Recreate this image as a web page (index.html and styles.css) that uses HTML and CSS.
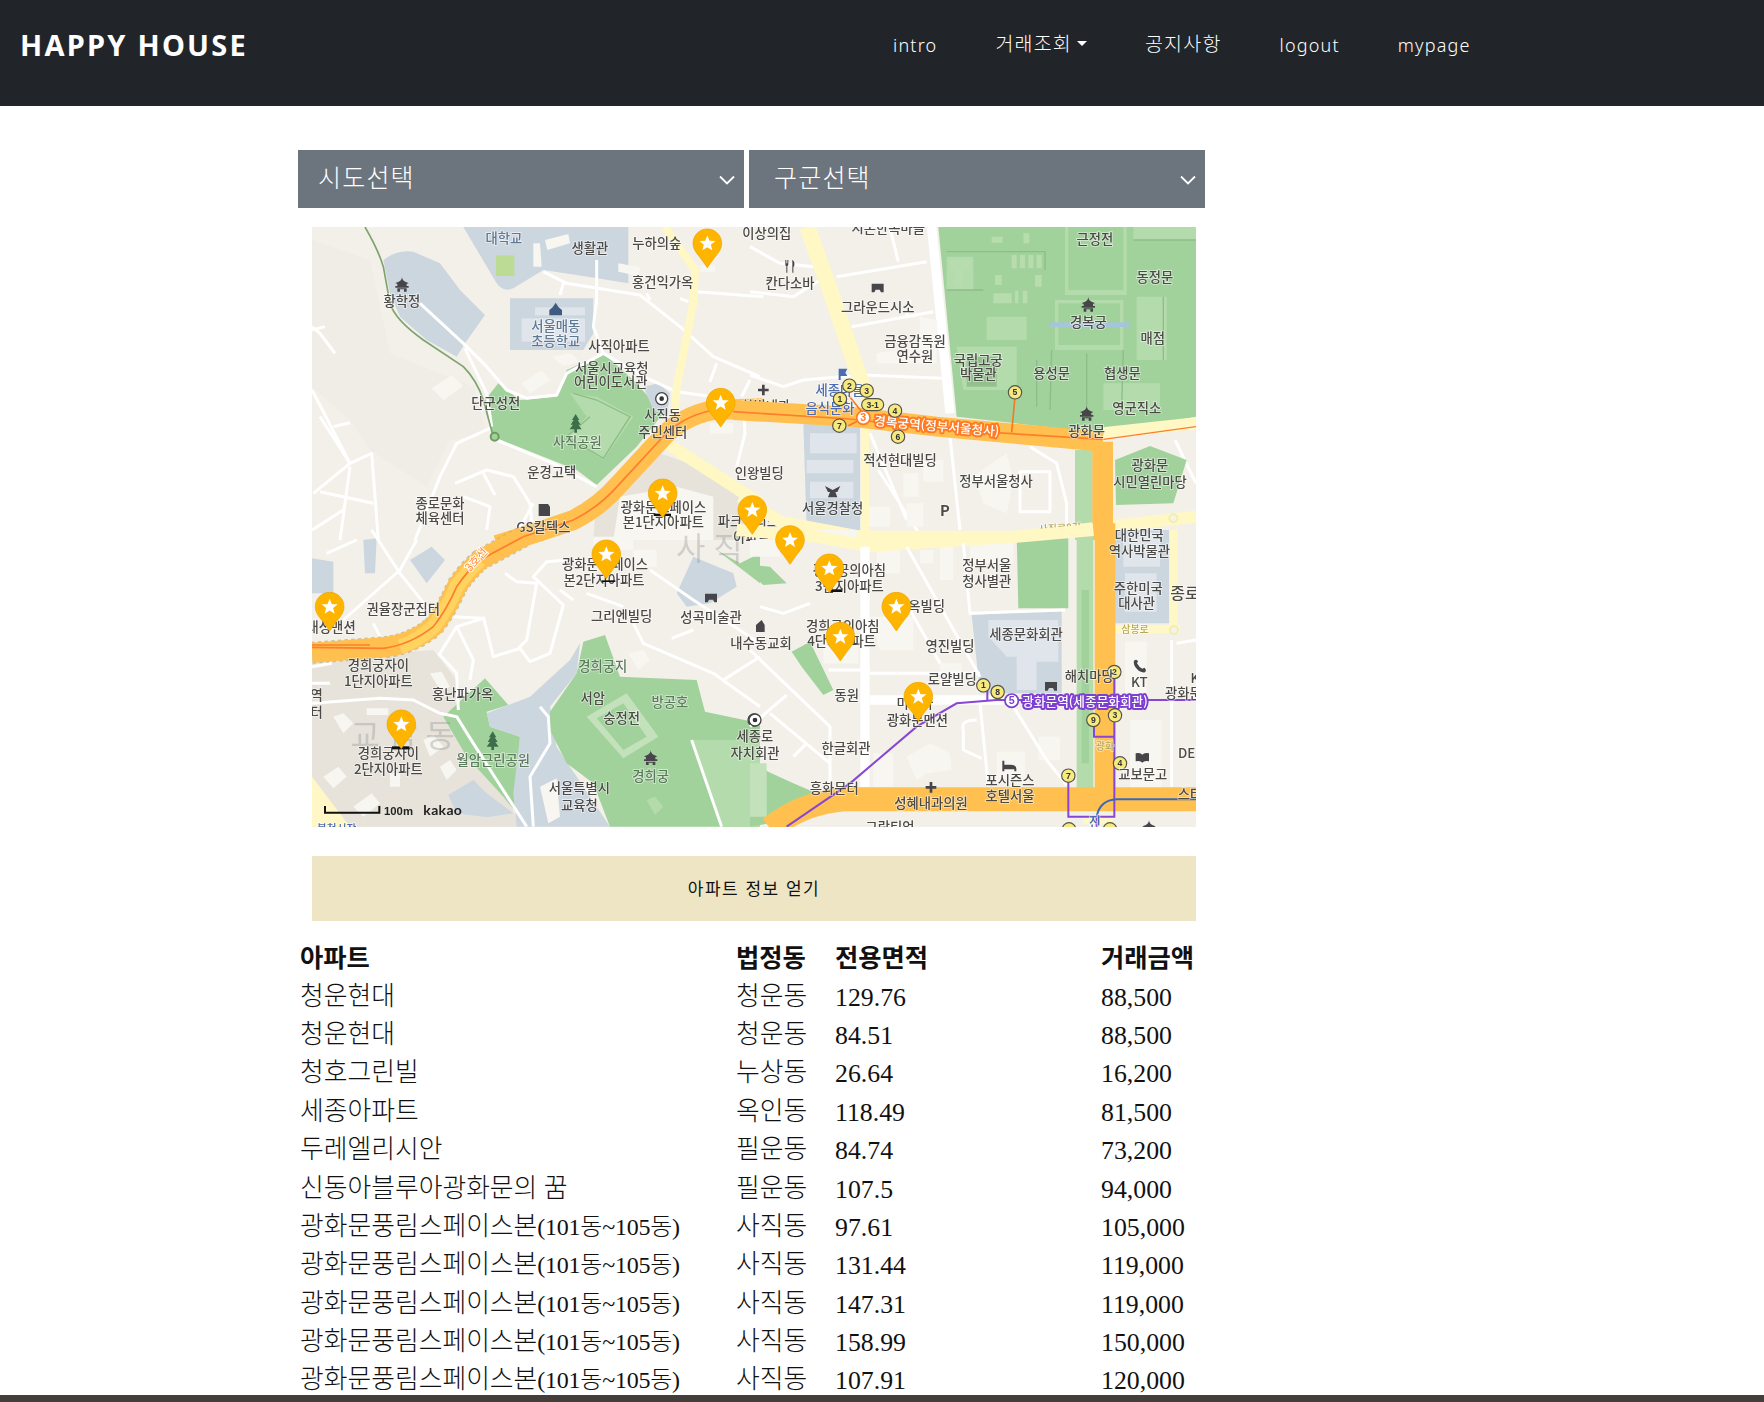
FILE: index.html
```html
<!DOCTYPE html>
<html lang="ko">
<head>
<meta charset="utf-8">
<title>HAPPY HOUSE</title>
<link rel="stylesheet" href="styles.css">
</head>
<body>
<nav class="navbar">
  <a class="brand">HAPPY HOUSE</a>
  <ul class="nav-links">
    <li>intro</li>
    <li class="dropdown ko">거래조회<span class="caret"></span></li>
    <li class="ko">공지사항</li>
    <li>logout</li>
    <li>mypage</li>
  </ul>
</nav>
<main class="content">
  <div class="selects">
    <div class="select first"><span>시도선택</span><svg class="chev" viewBox="0 0 16 10"><path d="M1 1.5l7 7 7-7"/></svg></div>
    <div class="select second"><span>구군선택</span><svg class="chev" viewBox="0 0 16 10"><path d="M1 1.5l7 7 7-7"/></svg></div>
  </div>
  <div class="map">
    <svg class="map-svg" viewBox="0 0 2652 1800" width="884" height="600">
      <defs>
        <g id="pin">
          <path class="pin-body" d="M0,-43 C24,-43 43,-24 43,0 C43,20 29,33 19,46 L0,73 L-19,46 C-29,33 -43,20 -43,0 C-43,-24 -24,-43 0,-43Z"/>
          <path class="pin-star" d="M0,-24 L6.5,-7.5 L24,-7 L10.500,4 L15,21 L0,11.500 L-15,21 L-10.500,4 L-24,-7 L-6.500,-7.500Z"/>
        </g>
        <path id="hanok" class="ico" d="M-20,-6 Q0,-10 0,-24 Q0,-10 20,-6 L14,-3 L14,3 L20,3 L20,8 L-20,8 L-20,3 L-14,3 L-14,-3Z M-14,10 H14 V20 H6 V13 H-6 V20 H-14Z"/>
        <path id="tree" class="ico-green" d="M0,-26 L11,-8 H6 L15,6 H8 L18,20 H4 V30 H-4 V20 H-18 L-8,6 H-15 L-6,-8 H-11Z"/>
        <path id="cross" class="ico" d="M-4,-16 H4 V-4 H16 V4 H4 V16 H-4 V4 H-16 V-4 H-4Z"/>
        <path id="museum" class="ico" d="M-18,-14 H18 V12 H10 L6,4 H-6 L-10,12 H-18Z"/>
      </defs>
      <rect class="land" width="2652" height="1800"/>

      <!-- top-left -->
      <g transform="translate(-36,-21)">
        <path class="hill" d="M36,60 L210,120 L270,400 L520,500 L560,640 L450,660 L380,800 L210,690 L150,600 L36,500Z"/>
        <path class="inst" d="M250,120 Q290,88 340,95 L420,130 L480,210 L555,285 L495,370 L470,410 L380,360 L300,290 L270,220Z"/>
        <path class="inst" d="M490,21 H985 V190 L830,165 L730,150 L640,205 Q610,218 590,190Z"/>
        <rect class="court" x="588" y="106" width="55" height="62"/>
        <path class="inst" d="M630,235 H880 V340 L850,390 H630Z"/>
        <rect class="pale-b" x="665" y="295" width="190" height="70"/>
        <rect class="pale-b" x="705" y="262" width="150" height="24"/>
        <path class="pale" d="M735,60 L805,42 L810,70 L742,90Z M955,130 L1020,142 L1015,168 L955,155Z M700,70 L720,70 L725,140 L700,140Z"/>
        <path class="park" d="M595,490 L660,540 L770,530 L800,450 L910,400 L1000,480 L1090,580 L1010,680 L890,795 L830,750 L590,655 L575,640 L555,540Z"/>
        <path class="park-l" d="M810,520 L890,530 L1000,590 L910,720 L800,650 L860,590Z"/>
        <path class="park-line" d="M820,520 L890,540 L990,590 L910,715 L800,650 L870,590"/>
        <path class="inst" d="M1030,500 L1075,490 L1110,520 L1100,590 L1060,570Z"/>
        <path class="pale" d="M395,505 L455,465 L490,498 L430,540Z M665,490 L725,450 L750,480 L690,520Z M755,410 L810,400 L840,425 L790,438Z"/>
        <path class="block" d="M880,960 L890,830 L1080,700 L1250,760 L1350,870 L1350,960Z"/>
        <path class="pale" d="M960,830 L1130,800 L1240,830 L1240,960 L940,960Z"/>
        <path class="pale" d="M1230,610 H1300 V640 H1230Z M1200,135 H1245 V155 H1200Z"/>
        <g class="r">
          <path d="M360,250 L490,370 L560,440 L620,510 L680,535 L770,525 L800,460 L910,400 L1030,470 L1130,515 L1240,530"/>
          <path d="M730,155 L800,190 L1020,225 L1140,320 L1240,410 L1380,470"/>
          <path d="M890,120 L890,240 L880,320 L910,400"/>
          <path d="M1190,215 L1390,230"/>
          <path d="M570,625 L470,670 L420,770 L345,960"/>
          <path d="M590,660 L760,730 L890,800"/>
          <path d="M495,385 L560,520 L575,620"/>
          <path d="M36,320 L60,340 L105,400 M36,330 L75,320"/>
          <path d="M36,510 L150,730 L215,700 L235,960"/>
          <path d="M60,590 L150,730 L40,820 M100,620 L150,608"/>
          <path d="M150,740 L120,960 M60,815 L220,850 M36,930 L130,870"/>
          <path d="M465,790 L560,750 L640,770 L690,850 L700,960"/>
          <path d="M550,760 L585,825 M490,830 L570,860 L560,930"/>
          <path d="M1330,540 L1335,640 L1310,740 M1350,480 L1325,530 M1250,430 L1230,485"/>
          <path d="M780,225 L790,190 M1050,240 L1040,220 M1140,235 L1165,245"/>
          <path d="M640,960 L700,850"/>
        </g>
        <path class="trail" d="M195,21 Q235,90 250,140 L270,250 Q285,300 370,360 L490,440 Q530,480 550,540 L580,650"/>
        <circle class="trail-dot" cx="584" cy="650" r="12"/>
        <path class="yroad" d="M1095,21 L1185,150 L1180,250 L1130,500 L1120,650"/>
        <path class="yroad wide" d="M1100,670 L1380,850"/>
        <path class="road" d="M590,975 Q720,935 820,900 Q900,860 960,790 L1080,660 Q1140,590 1240,570 L1390,565"/>
        <path class="road-line" d="M590,975 Q720,935 820,900 Q900,860 960,790 L1080,660 Q1140,590 1240,570 L1390,565"/>
        <text class="lb blue" x="612" y="68">대학교</text>
        <text class="lb" x="870" y="100">생활관</text>
        <text class="lb" x="1070" y="85">누하의숲</text>
        <text class="lb" x="1088" y="202">홍건익가옥</text>
        <text class="lb" x="306" y="258">황학정</text>
        <text class="lb blue" x="767" y="332">서울매동</text>
        <text class="lb blue" x="767" y="378">초등학교</text>
        <text class="lb" x="957" y="393">사직아파트</text>
        <text class="lb" x="935" y="458">서울시교육청</text>
        <text class="lb" x="932" y="500">어린이도서관</text>
        <text class="lb" x="587" y="565">단군성전</text>
        <text class="lb" x="1088" y="600">사직동</text>
        <text class="lb" x="1088" y="652">주민센터</text>
        <text class="lb green" x="832" y="680">사직공원</text>
        <text class="lb" x="755" y="772">운경고택</text>
        <text class="lb" x="420" y="865">종로문화</text>
        <text class="lb" x="420" y="910">체육센터</text>
        <text class="lb" x="730" y="935">GS칼텍스</text>
        <text class="lb" x="1397" y="573">한빛내과</text>
        <text class="lb" x="1378" y="775">인왕빌딩</text>
        <text class="lb" x="1090" y="875">광화문스페이스</text>
        <text class="lb" x="1090" y="920">본1단지아파트</text>
        <text class="lb" x="1345" y="918">파크팰리스</text>
        <use href="#hanok" x="306" y="195"/>
        <use href="#tree" x="827" y="608"/>
        <path class="ico-blue" d="M767,248 L776,262 L786,270 V286 H748 V270 L758,262Z"/>
        <circle class="target-o" cx="1085" cy="536" r="18"/><circle class="target-i" cx="1085" cy="536" r="7"/>
        <path class="ico" d="M716,852 H744 L750,860 V888 H716Z"/>
      </g>

      <!-- top-right -->
      <g transform="translate(1314,-21)">
        <path class="park" d="M565,21 H1338 V590 L1060,640 L620,590 Z"/>
        <path class="park-l" d="M590,110 H670 V210 H590Z M945,21 H1130 V225 H945Z M710,290 H830 V360 H710Z M620,380 H800 V510 H640Z M915,240 H1120 V390 H915Z M1160,230 H1250 V420 H1160Z M1150,21 H1338 V60 H1150Z M1060,490 H1230 V570 H1060Z"/>
        <path class="park" d="M955,21 H1120 V210 H955Z M925,250 H1110 V375 H925Z"/>
        <path class="park-line" d="M590,95 H885 V150 M860,420 V560 M1010,400 V600 M905,390 L900,570 M1120,390 L1115,560 M1150,60 H1338 M1240,230 V420 M590,210 H700"/>
        <path class="pale-g" d="M785,105 H800 V145 H785Z M810,105 H825 V145 H810Z M835,105 H850 V145 H835Z M860,105 H875 V145 H860Z M730,220 H785 V250 H730Z M795,212 H805 V250 H795Z M818,212 H832 V250 H818Z M735,165 H755 V195 H735Z M855,165 H875 V200 H855Z M820,40 H838 V70 H820Z M725,50 H758 V68 H725Z"/>
        <path class="court-g" d="M650,410 H740 V500 H650Z"/>
        <path class="pale-g" d="M600,120 H660 V150 H640 V200 H615 V150 H600Z"/>
        <rect class="moat" x="900" y="307" width="238" height="14"/>
        <path class="inst" d="M160,610 H330 V930 H170Z"/>
        <path class="pale-b" d="M170,720 H310 V760 H170Z M180,785 H310 V835 H180Z M180,640 H320 V700 H180Z"/>
        <path class="r wide" d="M545,21 L600,580"/>
        <g class="r">
          <path d="M0,465 L100,500 L160,480 L340,465"/>
          <path d="M0,80 L90,130 L190,140"/>
          <path d="M0,215 L130,230 L210,180 M260,170 L530,125 M305,320 L550,275"/>
          <path d="M420,25 L445,125 M470,290 L480,240"/>
          <path d="M340,465 L575,475"/>
          <path d="M600,650 L630,930"/>
          <path d="M360,640 L470,900 M385,750 L520,960"/>
          <path d="M840,680 L920,730 L950,850 L950,960"/>
          <path d="M810,755 H900 V875 H810Z"/>
          <path d="M1275,660 L1338,790"/>
        </g>
        <path class="pale" d="M670,770 L710,740 L770,700 L790,780 L770,880 L700,850Z M520,720 H580 V785 H520Z M460,760 H505 V830 H460Z M470,850 H520 V920 H470Z M350,860 H420 V920 H350Z M380,400 L510,380 L510,290 L560,300 V430 H380Z"/>
        <path class="park-l" d="M975,690 H1028 V960 H975Z"/>
        <path class="park" d="M1095,720 L1200,678 L1310,720 L1270,850 L1098,855Z"/>
        <path class="yroad vwide" d="M172,21 L240,210 L345,520"/>
        <path class="yroad" d="M345,520 V945"/>
        <path class="yroad wide" d="M-30,830 L90,905 L330,950 L800,950 L1030,925 L1338,890"/>
        <path class="yroad wide" d="M1060,640 L1338,610"/>
        <path class="road-line thin" d="M1060,658 L1338,620"/>
        <path class="road-w" d="M-50,570 L300,590 L560,620 L1058,665"/>
        <path class="road-v" d="M1058,665 V960"/>
        <path class="road-line" d="M-50,575 L300,597 L560,627 L1058,658"/>
        <circle class="ring" cx="1270" cy="895" r="12"/>
        <path class="stline" d="M295,525 L335,575 M340,595 L295,617 M795,530 L785,637"/>
        <text class="lb" x="50" y="55">이상의집</text>
        <text class="lb" x="415" y="40">시몬한옥마을</text>
        <text class="lb" x="1035" y="72">근정전</text>
        <text class="lb" x="120" y="205">칸다소바</text>
        <text class="lb" x="383" y="275">그라운드시소</text>
        <text class="lb" x="1215" y="187">동정문</text>
        <text class="lb" x="1015" y="320">경복궁</text>
        <text class="lb" x="1208" y="368">매점</text>
        <text class="lb" x="495" y="378">금융감독원</text>
        <text class="lb" x="495" y="422">연수원</text>
        <text class="lb" x="685" y="435">국립고궁</text>
        <text class="lb" x="685" y="478">박물관</text>
        <text class="lb" x="905" y="475">용성문</text>
        <text class="lb" x="1117" y="475">협생문</text>
        <text class="lb" x="1160" y="578">영군직소</text>
        <text class="lb" x="1010" y="648">광화문</text>
        <text class="lb blue2" x="270" y="525">세종마을</text>
        <text class="lb blue2" x="240" y="580">음식문화</text>
        <text class="lb" x="450" y="735">적선현대빌딩</text>
        <text class="lb" x="738" y="797">정부서울청사</text>
        <text class="lb" x="1200" y="750">광화문</text>
        <text class="lb" x="1200" y="802">시민열린마당</text>
        <text class="lb" x="248" y="878">서울경찰청</text>
        <text class="lb poi-p" x="585" y="888">P</text>
        <text class="lb road-name" x="930" y="935" transform="rotate(-3 930 935)">사직로8길</text>
        <text class="st-label orange" x="560" y="632" transform="rotate(5 560 620)">경복궁역(정부서울청사)</text>
        <circle class="st-ring-o" cx="340" cy="593" r="20"/>
        <text class="st-n big orange-t" x="340" y="604">3</text>
        <g class="st">
          <circle cx="298" cy="497" r="18"/><circle cx="350" cy="512" r="18"/><circle cx="270" cy="537" r="18"/>
          <rect x="335" y="536" width="66" height="36" rx="18"/><circle cx="435" cy="572" r="18"/>
          <circle cx="268" cy="617" r="18"/><circle cx="444" cy="650" r="18"/><circle cx="795" cy="517" r="18"/>
        </g>
        <text class="st-n" x="298" y="506">2</text><text class="st-n" x="350" y="521">3</text><text class="st-n" x="270" y="546">1</text>
        <text class="st-n" x="368" y="563">3-1</text><text class="st-n" x="435" y="581">4</text><text class="st-n" x="268" y="626">7</text>
        <text class="st-n" x="444" y="659">6</text><text class="st-n" x="795" y="526">5</text>
        <use href="#hanok" x="1015" y="255"/>
        <use href="#hanok" x="1010" y="582"/>
        <use href="#cross" x="40" y="510"/>
        <use href="#museum" x="383" y="205"/>
        <path class="ico" d="M106,120 h3 v10 h3 v-10 h3 v14 q-2,4 -3,4 v20 h-3 v-20 q-3,0 -3,-4Z M128,120 q8,6 4,20 h-2 v18 h-3 v-38Z"/>
        <path class="ico-blue2" d="M266,446 L292,446 L286,458 L292,468 L272,468 V480 H266Z"/>
        <path class="ico" d="M225,798 L248,810 L271,798 L262,816 L256,816 L262,832 H234 L240,816 L234,816Z"/>
      </g>

      <!-- bottom-left -->
      <g transform="translate(-36,909)">
        <path class="block" d="M36,385 L400,360 L470,450 L660,890 L36,890Z"/>
        <path class="tri" d="M36,740 L150,890 H36Z"/>
        <path class="inst" d="M36,85 L100,95 V190 H36Z M190,30 L230,25 L225,130 H195Z M330,90 L395,50 L435,90 L380,160Z M1130,190 L1180,80 L1300,130 L1310,170 L1230,220 L1160,230Z"/>
        <path class="park" d="M1250,60 L1380,160 V70 L1320,100Z"/>
        <path class="park" d="M430,560 L555,445 L625,525 L560,545 L570,590 L660,620 L650,850 L610,800 L500,680Z"/>
        <path class="inst" d="M840,340 L830,430 L750,530 L770,650 L930,890 L650,890 L640,790 L660,620 L570,590 L560,550 L690,500 L810,390Z"/>
        <path class="inst" d="M445,795 L520,750 L560,790 L640,850 L560,862 L470,850Z"/>
        <path class="park" d="M850,335 L915,315 L960,440 L1190,450 L1215,545 L1380,580 V890 H930 L880,760 L800,700 L750,600 L750,545 L830,430Z"/>
        <path class="park-l" d="M1180,630 H1380 V890 H1270Z M1040,810 L1065,800 L1090,830 L1065,855Z"/>
        <path class="hall" d="M980,490 L1075,620 L970,685 L860,560 Z"/>
        <path class="park" d="M970,520 L1040,620 L970,660 L890,565Z"/>
        <path class="pale" d="M720,770 L770,745 L780,860 L745,880Z M985,370 L1030,360 L1050,390 L1015,420Z M390,430 L425,425 L450,470 L420,480Z M200,535 H265 V555 H200Z M1000,60 H1070 V110 H1000Z M880,20 H1000 V60 H880Z"/>
        <path class="pale" d="M70,740 L115,710 L140,740 L100,775Z M160,830 L215,790 L240,820 L190,860Z M270,730 H300 V770 H270Z M420,710 L450,690 L470,720 L440,750Z M100,560 L130,550 L160,580 L130,610Z M370,630 L400,615 L430,650 L390,680Z"/>
        <g class="r">
          <path d="M36,520 L240,505 L340,510 L420,550 L470,560 L520,640 L590,750 L680,890"/>
          <path d="M415,370 L470,430 L475,540"/>
          <path d="M80,70 L170,30 M215,0 L300,130 L420,280 M350,30 L300,120 L130,270 M420,370 L470,290 L550,265 M460,260 L545,265"/>
          <path d="M550,260 L580,380 L660,355 L690,395 L750,370 L790,225 L700,140 L740,95 L800,90"/>
          <path d="M615,130 L650,155 L710,160 L680,330 L650,360"/>
          <path d="M1000,280 L1030,340 L1240,430 L1380,530 M1050,120 L1180,210 L1380,340 M1180,300 L1115,325"/>
          <path d="M1380,380 L1270,450 M470,290 L520,390 L510,450"/>
          <path d="M720,530 L745,560 L750,640 L690,740 L700,890"/>
          <path d="M1175,630 L1265,890"/>
          <path d="M220,280 L240,320 M36,410 L95,400 M90,460 H36"/>
          <path d="M780,180 L820,210 M970,230 L860,190"/>
        </g>
        <path class="road-dash" d="M36,368 L250,352 Q330,345 400,290 Q440,240 470,170 Q500,125 540,90 L670,20"/>
        <path class="road" d="M36,368 L250,352 Q330,345 400,290 Q440,240 470,170 Q500,125 540,90 L670,20"/>
        <path class="road-pale" d="M300,350 Q350,335 400,290 Q440,240 470,170 Q500,125 540,90"/>
        <path class="road-line" d="M36,352 L250,355 Q330,345 400,290 Q440,240 470,170 Q500,125 540,90 L670,20"/>
        <path class="road-line" d="M36,345 L210,345"/>
        <g class="road-label" transform="rotate(-48 530 90)"><text x="530" y="100">3호선</text></g>
        <text class="faint" x="1240" y="90">사직</text>
        <text class="faint" x="320" y="650">교남동</text>
        <text class="lb" x="1355" y="35">아파트</text>
        <text class="lb" x="310" y="252">권율장군집터</text>
        <text class="lb end" x="167" y="305">대성맨션</text>
        <text class="lb" x="915" y="118">광화문스페이스</text>
        <text class="lb" x="912" y="165">본2단지아파트</text>
        <text class="lb" x="965" y="272">그리엔빌딩</text>
        <text class="lb" x="1233" y="277">성곡미술관</text>
        <text class="lb" x="1383" y="355">내수동교회</text>
        <text class="lb" x="235" y="420">경희궁자이</text>
        <text class="lb" x="235" y="467">1단지아파트</text>
        <text class="lb green" x="908" y="422">경희궁지</text>
        <text class="lb" x="488" y="508">홍난파가옥</text>
        <text class="lb" x="878" y="520">서암</text>
        <text class="lb green" x="1110" y="530">방공호</text>
        <text class="lb" x="965" y="580">숭정전</text>
        <text class="lb" x="1365" y="632">세종로</text>
        <text class="lb" x="1365" y="685">자치회관</text>
        <text class="lb" x="265" y="685">경희궁자이</text>
        <text class="lb" x="265" y="732">2단지아파트</text>
        <text class="lb green" x="580" y="705">월암근린공원</text>
        <text class="lb" x="838" y="790">서울특별시</text>
        <text class="lb" x="838" y="840">교육청</text>
        <text class="lb green" x="1052" y="752">경희궁</text>
        <text class="lb end" x="68" y="510">역</text>
        <text class="lb end" x="68" y="560">터</text>
        <text class="lb blue2 small" x="110" y="905">봉천시장</text>
        <use href="#tree" x="578" y="630"/>
        <use href="#hanok" x="1052" y="685"/>
        <use href="#museum" x="1233" y="205"/>
        <circle class="target-o" cx="1362" cy="570" r="18"/><circle class="target-i" cx="1362" cy="570" r="7"/>
        <path class="scale" d="M75,828 V848 H238 V828"/>
        <text class="sc" x="252" y="856">100m</text>
        <text class="kakao" x="370" y="856">kakao</text>
      </g>

      <!-- bottom-right -->
      <g transform="translate(1314,909)">
        <path class="park" d="M800,15 H955 V235 H805Z"/>
        <path class="park" d="M0,105 L60,110 L110,160 L40,165 L0,130Z M125,365 L180,335 L250,480 L220,495 L155,410Z"/>
        <path class="inst" d="M665,255 L935,240 V490 H690Z M1095,0 H1258 V280 H1095Z"/>
        <path class="pale-b" d="M715,270 H925 V395 H860 V480 H800 V380 H770 L715,320Z M1120,10 H1230 V110 H1120Z M1125,130 H1220 V245 H1125Z"/>
        <path class="park" d="M0,700 L130,760 L200,790 L60,880 L0,890Z"/>
        <path class="hall" d="M0,700 H50 V860 H0Z"/>
        <rect class="park-l" x="980" y="10" width="50" height="765"/>
        <rect class="park" x="995" y="180" width="22" height="520"/>
        <path class="pale" d="M380,60 H450 V130 H380Z M360,260 H490 V360 H390Z M220,320 H325 V400 H220Z M510,60 H550 V100 H510Z M570,50 H610 V150 H570Z M660,30 H790 V100 H660Z M570,400 H635 V470 H570Z M740,665 H825 V760 H740Z M865,620 H930 V690 H865Z M470,680 L540,640 L600,670 L605,720 L530,730 L500,750Z M1125,335 H1190 V500 H1125Z M1140,570 H1235 V790 H1140Z M0,30 H90 V80 H0Z M370,670 H430 V770 H370Z M200,0 H320 V30 H200Z"/>
        <g class="yr-thin">
          <path d="M1270,0 V300 M1095,298 H1290"/>
        </g>
        <path class="yroad wide" d="M-40,0 L200,20 L350,48 L800,20 L1030,0"/>
        <g class="r">
          <path d="M345,50 V770"/>
          <path d="M470,50 L690,440 M640,40 L660,250 L945,240"/>
          <path d="M360,430 H690 M360,420 L235,420"/>
          <path d="M790,530 L890,690 L950,765"/>
          <path d="M690,520 L715,770 M0,360 L240,590 V770"/>
          <path d="M0,590 L110,495 M130,680 L170,640 M30,230 L100,250 L180,220 M60,550 L240,700"/>
          <path d="M1265,330 V770 M1280,340 L1338,330"/>
          <path d="M480,240 L570,400"/>
        </g>
        <path class="r wide" d="M360,510 H760"/>
        <path class="r wide" d="M345,50 V770"/>
        <path class="r" d="M640,600 Q630,570 680,570 M640,600 V660 L695,685"/>
        <circle class="ring" cx="1272" cy="300" r="12"/>
        <path class="road-v" d="M1065,-20 V790"/>
        <path class="road-b" d="M60,895 Q170,810 300,808 H1338"/>
        <path class="yroad" d="M1000,870 H1090"/>
        <path class="metro" d="M110,890 L300,760 L500,590 L620,520 L740,510 H1338"/>
        <path class="metro" d="M1093,430 V860 H955 V740 M1032,570 V620 H1090 M712,480 V510 M1040,860 V890"/>
        <path class="subway-b" d="M1040,860 Q1050,810 1100,808 H1338"/>
        <text class="st-label purple" x="1005" y="529">광화문역(세종문화회관)</text>
        <circle class="st-ring-p" cx="785" cy="512" r="20"/>
        <text class="st-n big purple-t" x="785" y="523">5</text>
        <g class="st">
          <circle cx="700" cy="466" r="18"/><circle cx="743" cy="486" r="18"/><circle cx="1093" cy="426" r="18"/>
          <circle cx="1095" cy="556" r="18"/><circle cx="1030" cy="570" r="18"/><circle cx="1110" cy="700" r="18"/>
          <circle cx="955" cy="737" r="18"/><circle cx="957" cy="898" r="18"/><circle cx="1080" cy="898" r="18"/>
        </g>
        <text class="st-n" x="700" y="475">1</text><text class="st-n" x="743" y="495">8</text><text class="st-n" x="1093" y="435">2</text>
        <text class="st-n" x="1095" y="565">3</text><text class="st-n" x="1030" y="579">9</text><text class="st-n" x="1110" y="709">4</text>
        <text class="st-n" x="955" y="746">7</text>
        <text class="lb" x="298" y="135">경희궁의아침</text>
        <text class="lb" x="298" y="182">3단지아파트</text>
        <text class="lb" x="530" y="243">옥빌딩</text>
        <text class="lb" x="278" y="302">경희궁의아침</text>
        <text class="lb" x="275" y="348">4단지아파트</text>
        <text class="lb" x="600" y="362">영진빌딩</text>
        <text class="lb" x="290" y="510">동원</text>
        <text class="lb" x="710" y="120">정부서울</text>
        <text class="lb" x="710" y="167">청사별관</text>
        <text class="lb" x="1168" y="30">대한민국</text>
        <text class="lb" x="1168" y="78">역사박물관</text>
        <text class="lb" x="1165" y="188">주한미국</text>
        <text class="lb" x="1160" y="235">대사관</text>
        <text class="lb big-l" x="1305" y="208">종로</text>
        <text class="lb" x="828" y="328">세종문화회관</text>
        <text class="lb road-name" x="1155" y="308">삼봉로</text>
        <text class="lb" x="607" y="463">로얄빌딩</text>
        <text class="lb" x="1018" y="452">해치마당</text>
        <text class="lb" x="1168" y="472">KT</text>
        <text class="lb" x="1300" y="503">광화문</text>
        <text class="lb" x="1335" y="458">K</text>
        <text class="lb" x="495" y="535">미도아</text>
        <text class="lb" x="502" y="585">광화문맨션</text>
        <text class="lb" x="288" y="668">한글회관</text>
        <text class="lb" x="1178" y="748">교보문고</text>
        <text class="lb" x="1310" y="685">DE</text>
        <text class="lb" x="253" y="788">흥화문터</text>
        <text class="lb" x="780" y="765">포시즌스</text>
        <text class="lb" x="780" y="812">호텔서울</text>
        <text class="lb" x="543" y="835">성혜내과의원</text>
        <text class="lb" x="1320" y="808">스타</text>
        <text class="lb" x="420" y="905">그랑티엄</text>
        <text class="lb road-name" x="1065" y="660">광화</text>
        <text class="lb blue2" x="1035" y="890">진</text>
        <circle class="target-o" cx="15" cy="570" r="18"/><circle class="target-i" cx="15" cy="570" r="7"/>
        <path class="ico" d="M35,270 L44,285 V306 H18 V285Z"/>
        <use href="#cross" x="543" y="772"/>
        <use href="#museum" x="903" y="470"/>
        <use href="#hanok" x="1197" y="895"/>
        <path class="ico" d="M1152,392 q8,-6 12,2 l-3,6 q6,12 16,16 l6,-3 q8,6 2,14 q-16,2 -26,-12 q-10,-12 -7,-23Z"/>
        <path class="ico" d="M1157,670 q14,-4 20,4 q6,-8 20,-4 v24 q-14,-4 -20,4 q-6,-8 -20,-4Z"/>
        <path class="ico" d="M757,692 h6 v12 h18 q18,0 18,12 v8 h-6 v-6 h-30 v6 h-6Z"/>
      </g>

      <!-- markers -->
      <g class="shadows">
        <rect x="1025" y="860" width="52" height="7"/>
        <rect x="1555" y="1087" width="36" height="8"/>
        <rect x="240" y="1558" width="52" height="9"/>
        <rect x="870" y="1060" width="40" height="5"/>
      </g>
      <use href="#pin" x="1186" y="49"/>
      <use href="#pin" x="1226" y="527"/>
      <use href="#pin" x="1052" y="799"/>
      <use href="#pin" x="1321" y="849"/>
      <use href="#pin" x="1434" y="939"/>
      <use href="#pin" x="883" y="982"/>
      <use href="#pin" x="1552" y="1024"/>
      <use href="#pin" x="53" y="1139"/>
      <use href="#pin" x="1753" y="1139"/>
      <use href="#pin" x="1585" y="1229"/>
      <use href="#pin" x="1819" y="1409"/>
      <use href="#pin" x="268" y="1492"/>
    </svg>
  </div>
  <button class="get-btn">아파트 정보 얻기</button>
  <table class="apts">
    <thead>
      <tr><th>아파트</th><th>법정동</th><th>전용면적</th><th>거래금액</th></tr>
    </thead>
    <tbody>
      <tr><td>청운현대</td><td>청운동</td><td>129.76</td><td>88,500</td></tr>
      <tr><td>청운현대</td><td>청운동</td><td>84.51</td><td>88,500</td></tr>
      <tr><td>청호그린빌</td><td>누상동</td><td>26.64</td><td>16,200</td></tr>
      <tr><td>세종아파트</td><td>옥인동</td><td>118.49</td><td>81,500</td></tr>
      <tr><td>두레엘리시안</td><td>필운동</td><td>84.74</td><td>73,200</td></tr>
      <tr><td>신동아블루아광화문의 꿈</td><td>필운동</td><td>107.5</td><td>94,000</td></tr>
      <tr><td>광화문풍림스페이스본<span class="dong">(101동~105동)</span></td><td>사직동</td><td>97.61</td><td>105,000</td></tr>
      <tr><td>광화문풍림스페이스본<span class="dong">(101동~105동)</span></td><td>사직동</td><td>131.44</td><td>119,000</td></tr>
      <tr><td>광화문풍림스페이스본<span class="dong">(101동~105동)</span></td><td>사직동</td><td>147.31</td><td>119,000</td></tr>
      <tr><td>광화문풍림스페이스본<span class="dong">(101동~105동)</span></td><td>사직동</td><td>158.99</td><td>150,000</td></tr>
      <tr><td>광화문풍림스페이스본<span class="dong">(101동~105동)</span></td><td>사직동</td><td>107.91</td><td>120,000</td></tr>
      <tr><td>광화문풍림스페이스본<span class="dong">(101동~105동)</span></td><td>사직동</td><td>84.97</td><td>84,000</td></tr>
    </tbody>
  </table>
</main>
<footer class="bottom-bar"></footer>
</body>
</html>
```

FILE: styles.css
```css
* { box-sizing: border-box; }
html, body { margin: 0; height: 100%; }
body {
  display: flex;
  flex-direction: column;
  height: 100vh;
  overflow: hidden;
  background: #fff;
  font-family: "Liberation Serif", "Noto Sans CJK KR", serif;
}

.navbar {
  flex: none;
  height: 106px;
  background: #212529;
  color: #fff;
  display: flex;
  align-items: flex-start;
  padding: 26px 0 0 20px;
  font-family: "Noto Sans", "Noto Sans CJK KR", sans-serif;
}
.brand {
  font-size: 29px;
  line-height: 38px;
  font-weight: 700;
  letter-spacing: 2.25px;
  width: 226px;
  white-space: nowrap;
}
.nav-links {
  list-style: none;
  display: flex;
  align-items: flex-start;
  gap: 58px;
  margin: 1px 0 0 647px;
  padding: 0;
  font-size: 18px;
  line-height: 36px;
  letter-spacing: 1.2px;
  font-weight: 300;
}
.nav-links .ko { font-size: 19.5px; line-height: 34px; }
.dropdown { display: flex; align-items: center; }
.caret {
  margin-left: 5px;
  margin-top: -1px;
  border-top: 5px solid #fff;
  border-left: 5px solid transparent;
  border-right: 5px solid transparent;
}

.content {
  flex: 1;
  min-height: 0;
  overflow: hidden;
  padding: 44px 0 0 298px;
}
.selects { display: flex; gap: 5px; height: 58px; }
.select {
  background: #6c757d;
  color: #fff;
  display: flex;
  align-items: center;
  justify-content: space-between;
  font-family: "Noto Sans CJK KR", sans-serif;
  font-size: 25px;
  font-weight: 300;
  letter-spacing: 1.2px;
  padding: 0 9px 6px 20px;
}
.select.first { width: 446px; }
.select.second { width: 456px; padding-left: 25px; }
.chev { width: 16px; height: 10px; margin-top: 8px; }
.chev path { fill: none; stroke: #fff; stroke-width: 1.8; }

.map { width: 884px; height: 600px; margin: 19px 0 0 14px; overflow: hidden; }
.map-svg { display: block; filter: blur(.45px); font-family: "Noto Sans CJK KR", sans-serif; }

.land { fill: #f3f0e9; }
.hill { fill: #efede5; }
.block { fill: #e7e3da; }
.inst { fill: #ccd6df; }
.pale { fill: #f8f6f1; }
.pale-b { fill: #dfe5ea; }
.pale-g { fill: #b7dcae; }
.court { fill: #bcdc96; }
.court-g { fill: #93c18e; }
.tri { fill: #fff8c6; }
.park { fill: #a2d29c; }
.park-l { fill: #b4dbab; }
.park-line { fill: none; stroke: #8dbd88; stroke-width: 4; }
.hall { fill: #c3e2bb; }
.moat { fill: #a6c5da; }
.r { fill: none; stroke: #fff; stroke-width: 9; stroke-linejoin: round; }
.r path { fill: none; }
.r.wide { stroke-width: 28; }
.yr-thin { fill: none; stroke: #fff8c6; stroke-width: 24; }
.trail { fill: none; stroke: #7da46c; stroke-width: 5; }
.trail-dot { fill: #a2d29c; stroke: #6f9a60; stroke-width: 6; }
.yroad { fill: none; stroke: #fff8c4; stroke-width: 24; }
.yroad.wide { stroke-width: 36; }
.yroad.vwide { stroke-width: 48; }
.road { fill: none; stroke: #ffc04f; stroke-width: 60; }
.road-w { fill: none; stroke: #ffc04f; stroke-width: 60; }
.road-v { fill: none; stroke: #ffc04f; stroke-width: 62; }
.road-b { fill: none; stroke: #ffc04f; stroke-width: 72; }
.road-pale { fill: none; stroke: #ffd35f; stroke-width: 44; }
.road-dash { fill: none; stroke: #b7ab7a; stroke-width: 66; stroke-dasharray: 10 10; opacity: .7; }
.road-line { fill: none; stroke: #ff7d2c; stroke-width: 5; }
.road-line.thin { stroke-width: 4; }
.stline { fill: none; stroke: #f57a25; stroke-width: 5; }
.metro { fill: none; stroke: #8746d4; stroke-width: 6; }
.subway-b { fill: none; stroke: #3b68b8; stroke-width: 6; }
.ring { fill: #f5f2e8; stroke: #f3eeb0; stroke-width: 6; }

.lb {
  font-size: 40px;
  fill: #4b4a47;
  text-anchor: middle;
  stroke: #fff;
  stroke-opacity: .55;
  stroke-width: 5px;
  paint-order: stroke;
  font-weight: 500;
}
.lb.end { text-anchor: end; }
.lb.blue { fill: #5d7893; }
.lb.blue2 { fill: #4d6bb0; }
.lb.green { fill: #5c7a5c; }
.lb.road-name { font-size: 30px; fill: #b9a85a; }
.lb.small { font-size: 32px; }
.lb.big-l { font-size: 48px; }
.lb.poi-p { font-size: 44px; font-weight: 700; }
.faint {
  font-size: 96px;
  fill: #8a8a8a;
  opacity: .32;
  text-anchor: middle;
  letter-spacing: 24px;
}
.st circle { fill: #f6ea7f; stroke: #55534a; stroke-width: 3.5; r: 20px; }
.st rect { fill: #f6ea7f; stroke: #55534a; stroke-width: 3.5; }
.st-n {
  font-size: 26px;
  font-weight: 700;
  text-anchor: middle;
  fill: #333;
  font-family: "Liberation Sans", sans-serif;
}
.st-n.big { font-size: 32px; }
.orange-t { fill: #ff7a25; }
.purple-t { fill: #7c3fd0; }
.st-ring-o { fill: #fff; stroke: #ff7a25; stroke-width: 5; }
.st-ring-p { fill: #fff; stroke: #7c3fd0; stroke-width: 5; }
.st-label {
  font-size: 38px;
  text-anchor: middle;
  fill: #fff;
  paint-order: stroke;
  stroke-width: 12px;
  stroke-linejoin: round;
  font-weight: 500;
}
.st-label.orange { stroke: #ff7a25; }
.st-label.purple { stroke: #7c3fd0; }
.road-label text {
  font-size: 34px;
  fill: #ff8a3c;
  stroke: #fff;
  stroke-width: 6px;
  paint-order: stroke;
  text-anchor: middle;
}
.ico { fill: #46454a; }
.ico-green { fill: #3d6e4a; }
.ico-blue { fill: #3f5c80; }
.ico-blue2 { fill: #4d6bb0; }
.target-o { fill: #fff; stroke: #444; stroke-width: 4; }
.target-i { fill: #333; }
.scale { fill: none; stroke: #111; stroke-width: 6; }
.sc { font-size: 34px; font-weight: 700; fill: #222; font-family: "Liberation Sans", sans-serif; }
.kakao { font-size: 42px; font-weight: 700; fill: #222; font-family: "Lato", sans-serif; letter-spacing: 1px; }
.shadows rect { fill: #111; }
.pin-body { fill: #ffb500; stroke: #e9a200; stroke-width: 2; }
.pin-star { fill: #fff; }

.get-btn {
  display: block;
  width: 884px;
  height: 65px;
  margin: 29px 0 0 14px;
  padding: 0 0 3px;
  border: 0;
  background: #eee5c4;
  color: #111;
  font-family: "Noto Sans CJK KR", sans-serif;
  font-size: 17px;
  letter-spacing: 1.5px;
  font-weight: 400;
}

.apts {
  border-collapse: collapse;
  table-layout: fixed;
  width: 896px;
  margin: 18px 0 0 2px;
  color: #111;
}
.apts th, .apts td {
  padding: 0;
  height: 38.4px;
  line-height: 30px;
  text-align: left;
  white-space: nowrap;
  font-size: 25.8px;
  font-weight: 300;
  vertical-align: middle;
}
.apts td:nth-child(n+3) { padding-top: 2px; }
.apts th { font-weight: 700; font-size: 25.3px; }
.apts th:nth-child(1) { width: 436px; }
.apts th:nth-child(2) { width: 99px; }
.apts th:nth-child(3) { width: 266px; }
.apts th:nth-child(4) { width: 95px; }
.dong { font-size: 24px; letter-spacing: -.25px; }

.bottom-bar { flex: none; height: 7px; background: #433e3a; }
```
